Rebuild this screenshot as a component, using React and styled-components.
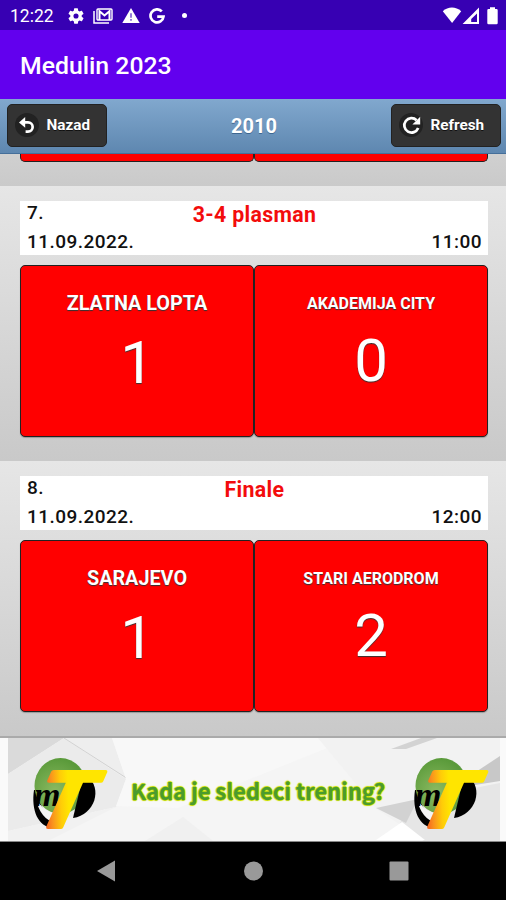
import React from 'react'
import styled, { createGlobalStyle } from 'styled-components'

const matches = [
    {
        id: 7,
        round: '3-4 plasman',
        date: '11.09.2022.',
        time: '11:00',
        home: { name: 'ZLATNA LOPTA', goals: 1 },
        away: { name: 'AKADEMIJA CITY', goals: 0, small: true }
    },
    {
        id: 8,
        round: 'Finale',
        date: '11.09.2022.',
        time: '12:00',
        home: { name: 'SARAJEVO', goals: 1 },
        away: { name: 'STARI AERODROM', goals: 2, small: true }
    }
]

const GearIcon = () => (
    <svg width="16" height="16" viewBox="2 2 20 20" fill="#fff">
        <path d="M19.14 12.94c.04-.3.06-.61.06-.94s-.02-.64-.07-.94l2.03-1.58a.49.49 0 0 0 .12-.61l-1.92-3.32a.49.49 0 0 0-.59-.22l-2.39.96a7 7 0 0 0-1.62-.94l-.36-2.54a.48.48 0 0 0-.48-.41h-3.84a.48.48 0 0 0-.47.41l-.36 2.54c-.59.24-1.13.57-1.62.94l-2.39-.96a.48.48 0 0 0-.59.22L2.74 8.87a.48.48 0 0 0 .12.61l2.03 1.58a7 7 0 0 0 0 1.88l-2.03 1.58a.49.49 0 0 0-.12.61l1.92 3.32c.12.22.37.29.59.22l2.39-.96c.5.38 1.03.7 1.62.94l.36 2.54c.05.24.24.41.48.41h3.84c.24 0 .44-.17.47-.41l.36-2.54a7 7 0 0 0 1.62-.94l2.39.96c.22.08.47 0 .59-.22l1.92-3.32a.48.48 0 0 0-.12-.61zM12 15.2a3.2 3.2 0 1 1 0-6.4 3.2 3.2 0 0 1 0 6.4z" />
    </svg>
)

const MailIcon = () => (
    <svg width="20" height="16" viewBox="0 0 20 16" fill="none" stroke="#fff">
        <path d="M1 3v12h15" strokeWidth="1.5" />
        <rect x="4" y="1" width="15" height="11" rx="1" strokeWidth="1.4" />
        <path d="M6.5 12V3.2l5 4.3 5-4.3V12" strokeWidth="2" />
    </svg>
)

const WarningIcon = () => (
    <svg width="18" height="15" viewBox="0 0 18 15">
        <path d="M9 0l8.7 15H.3z" fill="#fff" />
        <path d="M9 5.2v4.6M9 11v1.8" stroke="#7a5bd0" strokeWidth="1.6" />
    </svg>
)

const GoogleIcon = () => (
    <svg width="16" height="16" viewBox="0 0 16 16" fill="none" stroke="#fff" strokeWidth="2.7">
        <path d="M12.8 3.4A6.5 6.5 0 1 0 14.5 8.6H8.2" />
    </svg>
)

const SignalIcons = () => (
    <svg width="56" height="18" viewBox="0 0 56 18" fill="#fff">
        <path d="M.8 4.2C6-.6 13.8-.6 19.2 4.2L10.1 16z" />
        <path d="M20.6 17L37 .6V17zm8.6-1.9h5.8V6.4l-5.8 5.6z" fillRule="evenodd" />
        <path d="M48 .2h5V2h1.5q1.2 0 1.2 1.2V16q0 1.2-1.2 1.2h-8q-1.2 0-1.2-1.2V3.2q0-1.2 1.2-1.2H48z" />
    </svg>
)

const BackIcon = () => (
    <svg width="16" height="17" viewBox="0 0 16 17" fill="none" stroke="#fff" strokeWidth="2.7">
        <path d="M3.5 5.4H9a4.6 4.6 0 0 1 0 9.3H6.6" />
        <path d="M0 5.4L6.2.1v10.6z" fill="#fff" stroke="none" />
    </svg>
)

const RefreshIcon = () => (
    <svg width="19" height="19" viewBox="0 0 19 19" fill="none" stroke="#fff" strokeWidth="2.7">
        <path d="M14.6 4.2A7.2 7.2 0 1 0 16.2 12" />
        <path d="M18.2.8v7.8h-7.8z" fill="#fff" stroke="none" />
    </svg>
)

const Logo = ({ id }) => (
    <svg width="78" height="76" viewBox="0 0 78 76" overflow="visible">
        <defs>
            <linearGradient id={id} gradientUnits="userSpaceOnUse" x1="10" y1="0" x2="32.6" y2="-5.6">
                <stop offset="0" stopColor="#f4511e" />
                <stop offset="0.35" stopColor="#f9921e" />
                <stop offset="0.7" stopColor="#ffcc08" />
                <stop offset="1" stopColor="#ffe500" />
            </linearGradient>
            <radialGradient id={`${id}-g`} cx="0.4" cy="0.6" r="0.6">
                <stop offset="0" stopColor="#8cba62" />
                <stop offset="1" stopColor="#5a9a3a" />
            </radialGradient>
        </defs>
        <path d="M5 35C2 55 9 72 24 73l12-6C19 65 10 53 9 35z" fill="#000" />
        <ellipse cx="31.5" cy="31" rx="26" ry="28" fill={`url(#${id}-g)`} />
        <path d="M7 43C9 57 17 66 27 68l4-9C20 59 11 52 7 43z" fill="#f4f4f4" />
        <path d="M58 21C74 33 66 60 44 63l10-42z" fill="#000" />
        <LogoSmall x="5" y="50.5">m</LogoSmall>
        <LogoBig transform="translate(3.5 71.5) skewX(-13) scale(1.1 1)" fill={`url(#${id})`} stroke={`url(#${id})`}>
            T
        </LogoBig>
    </svg>
)

const Team = ({ team }) => (
    <TeamCard>
        <TeamName $small={team.small}>{team.name}</TeamName>
        <Goals $small={team.small}>{team.goals}</Goals>
    </TeamCard>
)

export default function App() {
    return (
        <Screen>
            <GlobalStyle />
            <StatusBar>
                <Clock>12:22</Clock>
                <GearIcon />
                <MailIcon />
                <WarningIcon />
                <GoogleIcon />
                <Dot />
                <StatusRight>
                    <SignalIcons />
                </StatusRight>
            </StatusBar>
            <AppBar>Medulin 2023</AppBar>
            <Toolbar>
                <ToolButton $width={100}>
                    <IconDisc><BackIcon /></IconDisc>
                    Nazad
                </ToolButton>
                <Title>2010</Title>
                <ToolButton $width={110}>
                    <IconDisc><RefreshIcon /></IconDisc>
                    Refresh
                </ToolButton>
            </Toolbar>

            <PreviousRow>
                <CardEnd />
                <CardEnd />
            </PreviousRow>
            {matches.map((match) => (
                <MatchRow key={match.id}>
                    <MatchHeader>
                        <Cell>{match.id}.</Cell>
                        <Round>{match.round}</Round>
                        <Cell />
                        <Cell $low>{match.date}</Cell>
                        <span />
                        <Cell $low $right>{match.time}</Cell>
                    </MatchHeader>
                    <Teams>
                        <Team team={match.home} />
                        <Team team={match.away} />
                    </Teams>
                </MatchRow>
            ))}

            <Banner>
                <BannerArt viewBox="0 0 492 103" preserveAspectRatio="none">
                    <path d="M0 0h492v103H0z" fill="#f5f5f5" />
                    <path d="M0 0h56L0 36z" fill="#dadada" />
                    <path d="M56 0L0 36v57l108-24 10-28z" fill="#ebebeb" />
                    <path d="M56 0h48l14 41z" fill="#eeeeee" />
                    <path d="M56 0l64 41" stroke="#d2d2d2" />
                    <path d="M104 0h240L170 70 108 68l10-27z" fill="#f8f8f8" />
                    <path d="M0 93l108-24-68 34H0z" fill="#f1f1f1" />
                    <path d="M137 103l38-24 30 24z" fill="#f0f0f0" />
                    <path d="M310 0h182v103h-76l-47-32z" fill="#f2f2f2" />
                    <path d="M383 11l30-11h16l-31 11z" fill="#d3d3d3" />
                    <path d="M405 63l25-6 62-12v58h-76l-24-18z" fill="#e6e6e6" />
                    <path d="M368 70l42-9-12 24z" fill="#d2d2d2" />
                    <path d="M492 18v25l-50 8z" fill="#c8c8c8" />
                    <path d="M368 102l26-18 23 18z" fill="#fff" />
                </BannerArt>
                <Logo id="left" />
                <BannerText>Kada je sledeci trening?</BannerText>
                <Logo id="right" />
            </Banner>
            <NavBar>
                <svg width="506" height="58" viewBox="0 0 506 58" fill="#999">
                    <path d="M97 29l18-10.5v21z" />
                    <circle cx="253.5" cy="29" r="9.5" />
                    <rect x="389.5" y="19.5" width="19" height="19" rx="1" />
                </svg>
            </NavBar>
        </Screen>
    )
}

const GlobalStyle = createGlobalStyle`
    * {
        box-sizing: border-box;
    }

    body {
        margin: 0;
        font-family: Roboto, sans-serif;
    }

    svg {
        display: block;
        flex: none;
    }
`

const Screen = styled.div`
    display: flex;
    flex-direction: column;
    width: 506px;
    height: 900px;
    overflow: hidden;
    background: #000;
`

const StatusBar = styled.div`
    display: flex;
    align-items: center;
    gap: 9px;
    height: 30px;
    padding: 1px 8px 0 10px;
    background: #3700b3;
    color: #fff;
`

const Clock = styled.span`
    width: 49px;
    font-size: 17.5px;
    line-height: 20px;
    white-space: nowrap;
`

const Dot = styled.span`
    width: 5px;
    height: 5px;
    margin-left: 8px;
    border-radius: 50%;
    background: #fff;
`

const StatusRight = styled.div`
    margin-left: auto;
`

const AppBar = styled.div`
    display: flex;
    align-items: center;
    height: 69px;
    padding: 2px 20px 0;
    background: #6200ee;
    color: #fff;
    font-size: 24.8px;
    font-weight: 500;
`

const Toolbar = styled.div`
    display: flex;
    align-items: flex-start;
    justify-content: space-between;
    height: 55px;
    padding: 5px 5px 0 7px;
    border-bottom: 1px solid #456f9a;
    background: linear-gradient(#81a8ce, #5e87b0);
    color: #fff;
`

const ToolButton = styled.button`
    display: flex;
    align-items: center;
    gap: 7.5px;
    width: ${({ $width }) => $width}px;
    height: 43px;
    padding: 0 0 1px 7px;
    border: 1px solid #222;
    border-radius: 5px;
    background: #333;
    color: #fff;
    font: 700 15.3px Roboto, sans-serif;
    text-shadow: 0 1px 0 #111;
`

const IconDisc = styled.span`
    display: flex;
    align-items: center;
    justify-content: center;
    width: 24px;
    height: 24px;
    border-radius: 50%;
    background: #222;
`

const Title = styled.div`
    padding-left: 10px;
    font-size: 20px;
    font-weight: 700;
    line-height: 44px;
    text-shadow: 0 1px 0 #3e6790;
`

const PreviousRow = styled.div`
    display: flex;
    height: 32px;
    padding: 0 18px 0 20px;
    background: linear-gradient(#d0d0d0, #cacaca);
`

const CardEnd = styled.div`
    flex: 1;
    height: 8px;
    border: 1px solid #222;
    border-top: 0;
    border-radius: 0 0 5px 5px;
    background: #f00;
`

const MatchRow = styled.div`
    height: 275px;
    flex: none;
    padding: 15px 18px 0 20px;
    background: linear-gradient(#e6e6e6, #c9c9c9);
`

const MatchHeader = styled.div`
    display: grid;
    grid-template-columns: 1fr auto 1fr;
    grid-template-rows: 28px 26px;
    height: 54px;
    padding: 0 6px 0 7px;
    background: #fff;
`

const Cell = styled.span`
    padding-top: ${({ $low }) => ($low ? 1 : 0)}px;
    color: #111;
    font-size: 19px;
    font-weight: 500;
    line-height: 24px;
    letter-spacing: 0.45px;
    text-align: ${({ $right }) => ($right ? 'right' : 'left')};
`

const Round = styled.span`
    color: #f30c0c;
    font-size: 21.3px;
    font-weight: 700;
    line-height: 28px;
    letter-spacing: 0.35px;
`

const Teams = styled.div`
    display: flex;
    margin-top: 10px;
`

const TeamCard = styled.div`
    display: flex;
    flex: 1;
    flex-direction: column;
    align-items: center;
    height: 172px;
    padding-top: 25px;
    border: 1px solid #222;
    border-radius: 5px;
    background: #f00;
    box-shadow: 0 1px 1px rgba(0, 0, 0, 0.25);
    color: #fff;
    text-shadow: 0 1px 1px #333;
`

const TeamName = styled.div`
    font-size: ${({ $small }) => ($small ? 16 : 19.8)}px;
    font-weight: 700;
    line-height: 26px;
    white-space: nowrap;
`

const Goals = styled.div`
    margin-top: ${({ $small }) => ($small ? 9 : 11)}px;
    font-size: 60px;
    line-height: 70px;
`

const Banner = styled.div`
    position: relative;
    display: flex;
    align-items: center;
    justify-content: space-between;
    flex: none;
    height: 106px;
    padding: 6px 18px 0 29px;
    border-top: 2px solid #aaa;
    border-bottom: 1px solid #888;
    background: #fafafa;

    > * {
        position: relative;
    }
`

// faceted paper pattern behind the banner contents
const BannerArt = styled.svg`
    && {
        position: absolute;
        top: 0;
        left: 8px;
        width: 492px;
        height: 103px;
    }
`

const BannerText = styled.div`
    color: #4b9b2e;
    font-family: 'Noto Sans CJK SC', sans-serif;
    font-size: 21.9px;
    font-weight: 700;
    line-height: 30px;
    padding-bottom: 3px;
    margin-left: -1px;
    white-space: nowrap;
    -webkit-text-stroke: 0.3px #4b9b2e;
    text-shadow: 1px 0 1px #d8e800, -1px 0 1px #d8e800, 0 1px 1px #d8e800, 0 -1px 1px #d8e800;
`

const LogoSmall = styled.text`
    font: italic 700 34px 'Liberation Serif', serif;
`

const LogoBig = styled.text`
    font: italic 700 80px 'Liberation Sans', sans-serif;
    stroke-width: 4px;
    stroke-linejoin: round;
`

const NavBar = styled.div`
    height: 58px;
    background: #000;
`
